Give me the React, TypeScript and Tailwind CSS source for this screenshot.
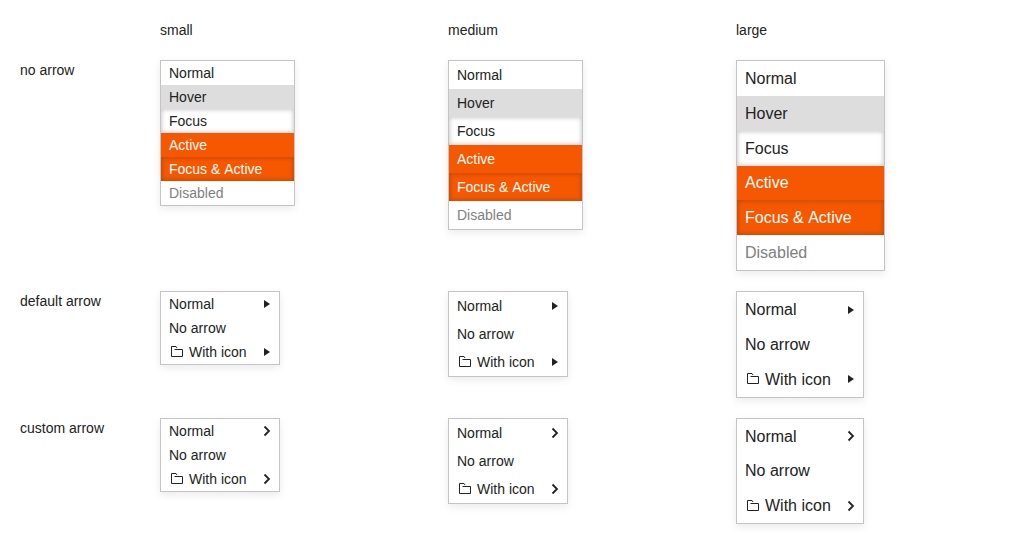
type Size = 'small' | 'medium' | 'large';
type Arrow = 'default' | 'custom';
type State = 'normal' | 'hover' | 'focus' | 'active' | 'focusActive' | 'disabled';

const sizes: Size[] = ['small', 'medium', 'large'];

const itemSize: Record<Size, string> = {
  small: 'h-6 text-[14px]',
  medium: 'h-7 text-[14px]',
  large: 'h-[34.85px] text-[16px]',
};

const labelSize: Record<Size, string> = {
  small: 'leading-6',
  medium: 'leading-7',
  large: 'pt-[8.92px] leading-[18px]',
};

const itemState: Record<State, string> = {
  normal: '',
  hover: 'bg-[#dddddd]',
  focus: 'shadow-[inset_0_0_4px_1px_rgba(0,0,0,0.2)]',
  active: 'bg-[#f55800] text-white',
  focusActive: 'bg-[#f55800] text-white shadow-[inset_0_0_4px_1px_rgba(0,0,0,0.2)]',
  disabled: 'text-[#7f7f7f]',
};

const states: { label: string; state: State }[] = [
  { label: 'Normal', state: 'normal' },
  { label: 'Hover', state: 'hover' },
  { label: 'Focus', state: 'focus' },
  { label: 'Active', state: 'active' },
  { label: 'Focus & Active', state: 'focusActive' },
  { label: 'Disabled', state: 'disabled' },
];

const panel = 'border border-[#c4c4c4] bg-white shadow-[0_3px_8px_rgba(0,0,0,0.08)]';

function FolderIcon() {
  return (
    <svg className="mr-1 size-4 shrink-0" viewBox="0 0 16 16" fill="none" stroke="currentColor">
      <path d="M5.500 5.500h8v7h-11v-10h4.500l1 1.500" />
    </svg>
  );
}

function ArrowIcon({ arrow }: { arrow: Arrow }) {
  return (
    <svg className="mt-[0.2px] ml-auto size-4 shrink-0" viewBox="0 0 16 16">
      {arrow === 'default' ? (
        <path d="M5 4l6 4-6 4z" fill="currentColor" />
      ) : (
        <path d="M5.500 3.500L10 8l-4.500 4.500" fill="none" stroke="currentColor" strokeWidth="1.800" />
      )}
    </svg>
  );
}

function StatesMenu({ size }: { size: Size }) {
  return (
    <div className={`${size === 'large' ? 'w-[149px]' : 'w-[135px]'} ${panel}`}>
      {states.map(({ label, state }) => (
        <div key={label} className={`flex items-start px-2 ${itemSize[size]} ${itemState[state]}`}>
          <span className={labelSize[size]}>{label}</span>
        </div>
      ))}
    </div>
  );
}

function ArrowMenu({ size, arrow }: { size: Size; arrow: Arrow }) {
  const row = `flex items-center pl-2 pr-1 ${itemSize[size]}`;
  const label = `self-start ${labelSize[size]}`;
  return (
    <div className={`${size === 'large' ? 'w-32' : 'w-[120px]'} ${panel}`}>
      <div className={row}><span className={label}>Normal</span><ArrowIcon arrow={arrow} /></div>
      <div className={row}><span className={label}>No arrow</span></div>
      <div className={row}><FolderIcon /><span className={label}>With icon</span><ArrowIcon arrow={arrow} /></div>
    </div>
  );
}

export default function App() {
  return (
    <main className="grid h-[544px] grid-cols-[140px_288px_288px_288px] content-start items-start gap-y-5 overflow-hidden bg-white pl-5 pt-5 font-['Liberation_Sans',Arial,sans-serif] text-[14px] leading-5 text-[#222222] [font-kerning:none]">
      <div />
      {sizes.map((size) => <div key={size}>{size}</div>)}
      <div>no arrow</div>
      {sizes.map((size) => <StatesMenu key={size} size={size} />)}
      <div>default arrow</div>
      {sizes.map((size) => <ArrowMenu key={size} size={size} arrow="default" />)}
      <div>custom arrow</div>
      {sizes.map((size) => <ArrowMenu key={size} size={size} arrow="custom" />)}
    </main>
  );
}
